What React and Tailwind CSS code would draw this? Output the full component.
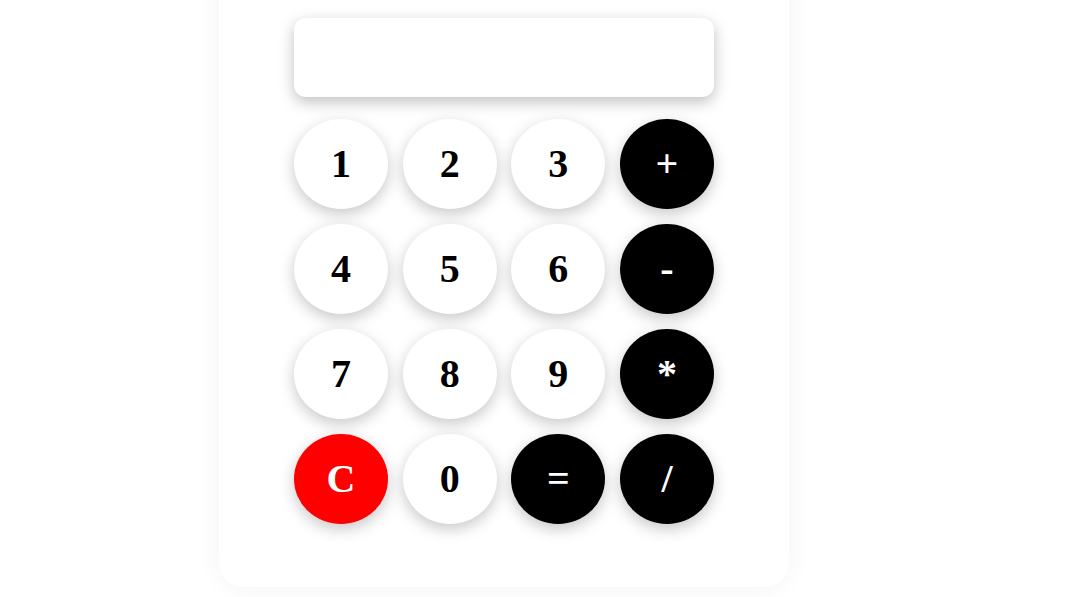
import React, { useState } from 'react';

const keys = [
  { label: '1' }, { label: '2' }, { label: '3' }, { label: '+', op: true },
  { label: '4' }, { label: '5' }, { label: '6' }, { label: '-', op: true },
  { label: '7' }, { label: '8' }, { label: '9' }, { label: '*', op: true },
  { label: 'C', clear: true }, { label: '0' }, { label: '=', op: true }, { label: '/', op: true },
];

const App = () => {
  const [value, setValue] = useState('');

  const press = (k) => {
    if (k.clear) return setValue('');
    if (k.label === '=') {
      try {
        // eslint-disable-next-line no-new-func
        setValue(String(Function(`return (${value})`)()));
      } catch {
        setValue('Error');
      }
      return;
    }
    setValue((v) => v + k.label);
  };

  return (
    <div className="min-h-screen bg-white overflow-hidden font-['Liberation_Serif',serif]">
      <div className="ml-[219px] mt-[-45px] w-[570px] rounded-[24px] bg-white px-[75px] pt-[63px] pb-[63px] shadow-[0_0_25px_rgba(0,0,0,0.05)]">
        <input
          readOnly
          value={value}
          className="mb-[22px] block h-[79px] w-full rounded-[12px] bg-white px-4 text-right text-[40px] font-bold text-black shadow-[0_5px_15px_rgba(0,0,0,0.25)] outline-none"
        />
        <div className="grid grid-cols-4 gap-x-[14.67px] gap-y-[15px]">
          {keys.map((k) => (
            <button
              key={k.label}
              onClick={() => press(k)}
              className={`flex h-[90px] items-center justify-center rounded-[50%] text-[40px] font-bold leading-none shadow-[0_5px_15px_rgba(0,0,0,0.22)] ${
                k.clear ? 'bg-[#ff0000] text-white' : k.op ? 'bg-black text-white' : 'bg-white text-black'
              }`}
            >
              {k.label}
            </button>
          ))}
        </div>
      </div>
    </div>
  );
};

export default App;
